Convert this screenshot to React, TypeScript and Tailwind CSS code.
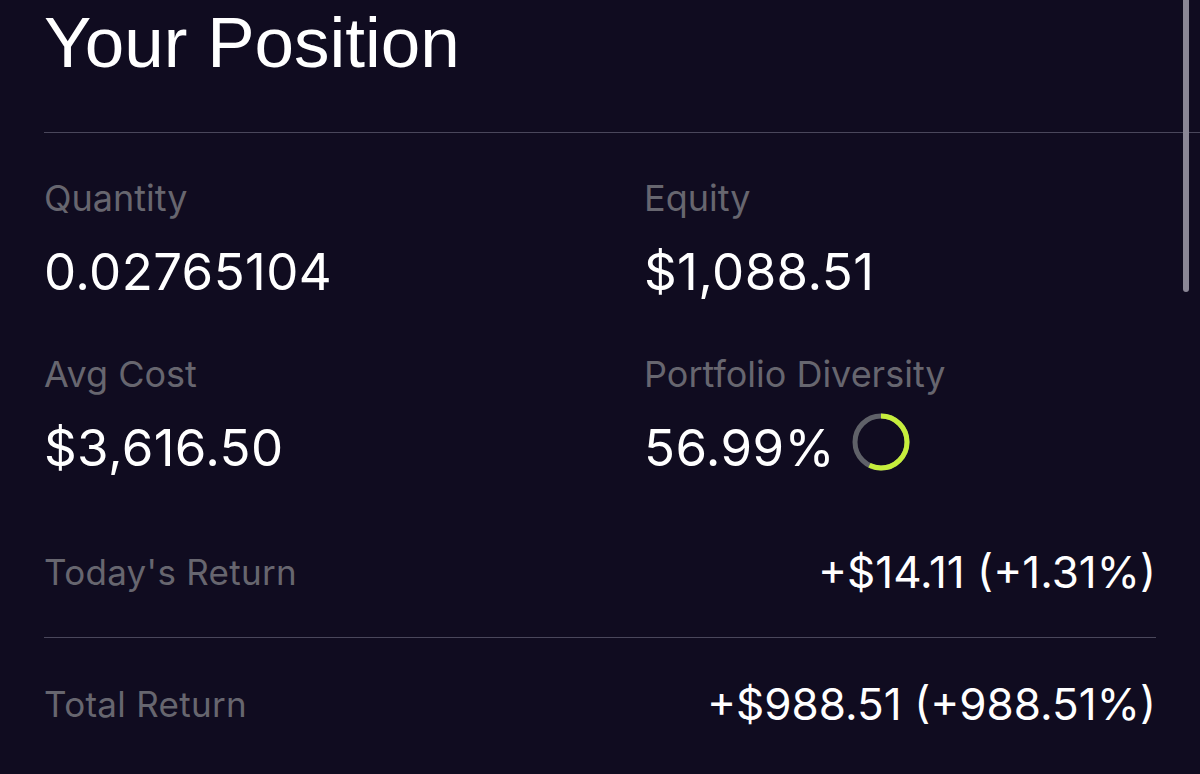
import React from 'react';

const ui = { fontFamily: 'Inter, "Noto Sans", sans-serif' };
const title = { fontFamily: '"Liberation Sans", Arial, sans-serif' };

function Ring({ pct }: { pct: number }) {
  const r = 26;
  const c = 2 * Math.PI * r;
  return (
    <svg width="60" height="60" viewBox="0 0 60 60" className="-mt-[14px] -mb-[2px] ml-[16px] shrink-0">
      <circle cx="30" cy="30" r={r} fill="none" stroke="#5f6168" strokeWidth="5" />
      <circle
        cx="30"
        cy="30"
        r={r}
        fill="none"
        stroke="#c6ee3c"
        strokeWidth="5"
        strokeDasharray={`${(c * pct) / 100} ${c}`}
        transform="rotate(-90 30 30)"
      />
    </svg>
  );
}

function Stat({ label, value, extra }: { label: string; value: string; extra?: React.ReactNode }) {
  return (
    <div className="flex flex-col">
      <div className="text-[36px] leading-[40px] text-[#67666f]">{label}</div>
      <div className="mt-[26px] flex h-[56px] items-center">
        <span className="text-[51px] leading-[56px] tracking-[0.4px] text-white">{value}</span>
        {extra}
      </div>
    </div>
  );
}

function ReturnRow({ label, value, last }: { label: string; value: string; last?: boolean }) {
  return (
    <div className={`flex h-[131px] items-center justify-between ${last ? '' : 'border-b border-[#4a475b]'}`}>
      <span className="text-[35px] leading-[40px] tracking-[0.3px] text-[#67666f]">{label}</span>
      <span className="text-[44px] leading-[48px] text-white">{value}</span>
    </div>
  );
}

export default function App() {
  return (
    <div className="relative h-[774px] w-[1200px] overflow-hidden bg-[#100c20]" style={ui}>
      {/* scrollbar */}
      <div className="absolute right-[11px] top-[-8px] h-[300px] w-[6px] rounded-full bg-[#8b8796]" />

      <div className="ml-[44px] h-[133px] border-b border-[#4a475b] pt-[3px]">
        <h1 className="text-[71px] leading-[80px] text-white" style={title}>
          Your Position
        </h1>
      </div>

      <div className="mx-[44px]">
        <div className="grid grid-cols-[600px_1fr] gap-y-[54px] pt-[45px]">
          <Stat label="Quantity" value="0.02765104" />
          <Stat label="Equity" value="$1,088.51" />
          <Stat label="Avg Cost" value="$3,616.50" />
          <Stat label="Portfolio Diversity" value="56.99%" extra={<Ring pct={56.99} />} />
        </div>

        <div className="mt-[31px]">
          <ReturnRow label="Today's Return" value="+$14.11 (+1.31%)" />
          <ReturnRow label="Total Return" value="+$988.51 (+988.51%)" last />
        </div>
      </div>
    </div>
  );
}
